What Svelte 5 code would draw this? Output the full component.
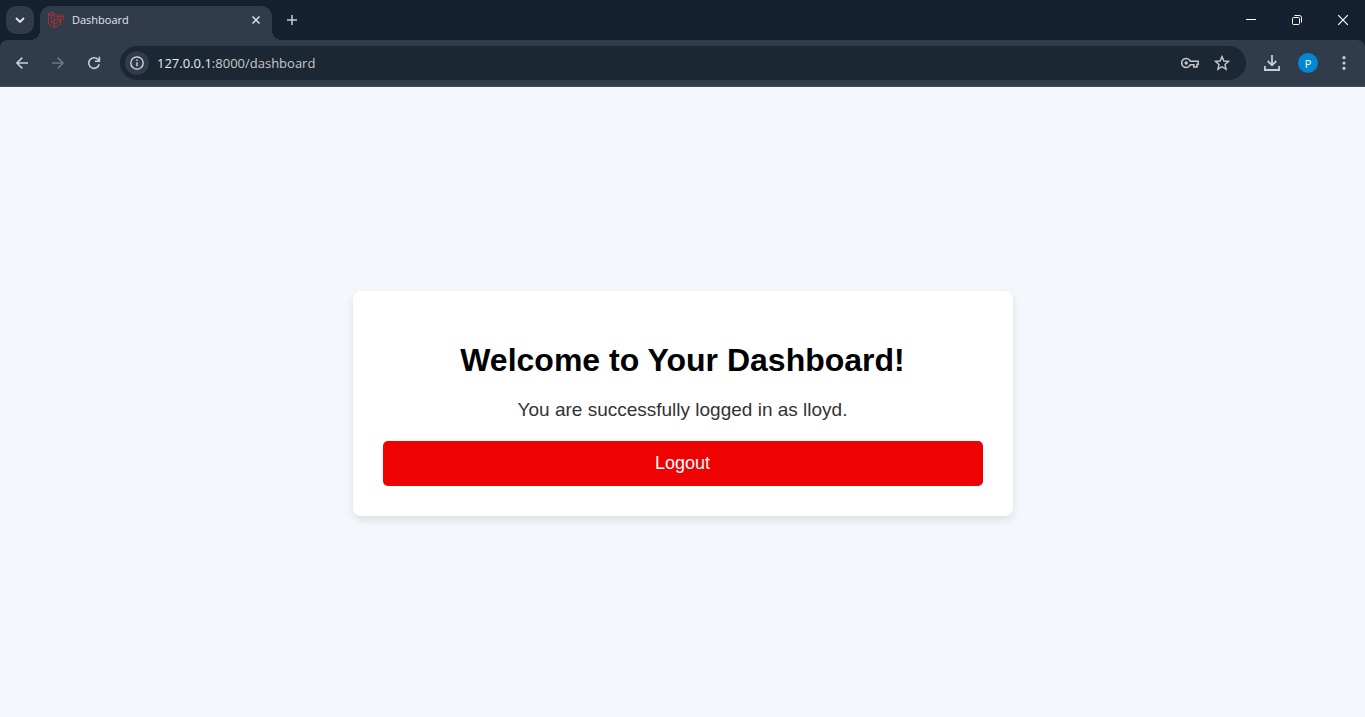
<script>
  const user = 'lloyd';
  const host = '127.0.0.1';
  const path = ':8000/dashboard';
</script>

<div class="window">
  <header>
    <div class="tabstrip">
      <button class="tabsearch" aria-label="Search tabs">
        <svg width="10" height="6" viewBox="0 0 10 6"><path d="M1 1l4 4 4-4" fill="none" stroke="#e3e6ea" stroke-width="1.8" /></svg>
      </button>
      <div class="tab">
        <svg width="16" height="16" viewBox="0 0 50 52" fill="#ff2d20" aria-hidden="true"><path d="M49.626 11.564a.809.809 0 0 1 .028.209v10.972a.8.8 0 0 1-.402.694l-9.209 5.302V39.25c0 .286-.152.55-.4.694L20.42 51.01c-.044.025-.092.041-.14.058-.018.006-.035.017-.054.022a.805.805 0 0 1-.41 0c-.022-.006-.042-.018-.063-.026-.044-.016-.09-.03-.132-.054L.402 39.944A.801.801 0 0 1 0 39.25V6.334c0-.072.01-.142.028-.21.006-.023.02-.044.028-.067.015-.042.029-.085.051-.124.015-.026.037-.047.055-.071.023-.032.044-.065.071-.093.023-.023.053-.04.079-.06.029-.024.055-.05.088-.069h.001l9.61-5.533a.802.802 0 0 1 .8 0l9.61 5.533h.002c.032.02.059.045.088.068.026.02.055.038.078.06.028.029.048.062.072.094.017.024.04.045.054.071.023.04.036.082.052.124.008.023.022.044.028.068a.809.809 0 0 1 .028.209v20.559l8.008-4.611v-10.51c0-.07.01-.141.028-.208.007-.024.02-.045.028-.068.016-.042.03-.085.052-.124.015-.026.037-.047.054-.071.024-.032.044-.065.072-.093.023-.023.052-.04.078-.06.03-.024.056-.05.088-.069h.001l9.611-5.533a.801.801 0 0 1 .8 0l9.61 5.533c.034.02.06.045.09.068.025.02.054.038.077.06.028.029.048.062.072.094.018.024.04.045.054.071.023.039.036.082.052.124.009.023.022.044.028.068zm-1.574 10.718v-9.124l-3.363 1.936-4.646 2.675v9.124l8.01-4.611zm-9.61 16.505v-9.13l-4.57 2.61-13.05 7.448v9.216l17.62-10.144zM1.602 7.719v31.068L19.22 48.93v-9.214l-9.204-5.209-.003-.002-.004-.002c-.031-.018-.057-.044-.086-.066-.025-.02-.054-.036-.076-.058l-.002-.003c-.026-.025-.044-.056-.066-.084-.02-.027-.044-.05-.06-.078l-.001-.003c-.018-.03-.029-.066-.042-.1-.013-.03-.03-.058-.038-.09v-.001c-.01-.038-.012-.078-.016-.117-.004-.03-.012-.06-.012-.09v-.002-21.481L4.965 9.654 1.602 7.72zm8.81-5.994L2.405 6.334l8.005 4.609 8.006-4.61-8.006-4.608zm4.164 28.764l4.645-2.674V7.719l-3.363 1.936-4.646 2.675v20.096l3.364-1.937zM39.243 7.164l-8.006 4.609 8.006 4.609 8.005-4.61-8.005-4.608zm-.801 10.605l-4.646-2.675-3.363-1.936v9.124l4.645 2.674 3.364 1.937v-9.124zM20.02 38.33l11.743-6.704 5.87-3.35-8-4.606-9.211 5.303-8.395 4.833 7.993 4.524z" /></svg>
        <span class="title">Dashboard</span>
        <button class="icon small" aria-label="Close tab">
          <svg width="8" height="8" viewBox="0 0 8 8"><path d="M.5.5l7 7M7.5.5l-7 7" stroke="#dfe3e8" stroke-width="1.5" /></svg>
        </button>
      </div>
      <button class="icon newtab" aria-label="New tab">
        <svg width="10" height="10" viewBox="0 0 10 10"><path d="M5 0v10M0 5h10" stroke="#c3cfdd" stroke-width="1.5" /></svg>
      </button>
      <div class="controls">
        <button aria-label="Minimize"><svg width="10" height="10" viewBox="0 0 10 10"><path d="M0 4.5h10" stroke="#fff" /></svg></button>
        <button aria-label="Restore"><svg width="10" height="10" viewBox="0 0 10 10" fill="none" stroke="#fff"><rect x=".5" y="2.5" width="7" height="7" rx="1" /><path d="M2.5.5h5a2 2 0 0 1 2 2v5" /></svg></button>
        <button aria-label="Close"><svg width="10" height="10" viewBox="0 0 10 10"><path d="M0 0l10 10M10 0L0 10" stroke="#fff" stroke-width="1.2" /></svg></button>
      </div>
    </div>

    <div class="toolbar">
      <div class="nav">
        <button class="icon" aria-label="Back"><svg width="12" height="12" viewBox="0 0 12 12"><path d="M12 6H1.2M6.3.6L.9 6l5.4 5.4" fill="none" stroke="#c3cfdd" stroke-width="1.5" /></svg></button>
        <button class="icon" aria-label="Forward"><svg width="12" height="12" viewBox="0 0 12 12"><path d="M0 6h10.8M5.7.6L11.1 6l-5.4 5.4" fill="none" stroke="#6e7784" stroke-width="1.5" /></svg></button>
        <button class="icon" aria-label="Reload"><svg width="14" height="14" viewBox="0 0 14 14" fill="none" stroke="#c3cfdd" stroke-width="1.6"><path d="M12.2 8.2A5.3 5.3 0 1 1 10.9 3.4l1.3 1.3" /><path d="M12.4.8v4.5H7.9" /></svg></button>
      </div>
      <div class="address">
        <button class="icon info" aria-label="Site information"><svg width="14" height="14" viewBox="0 0 14 14" fill="none" stroke="#dfe3e8" stroke-width="1.3"><circle cx="7" cy="7" r="6.2" /><path d="M7 6.2v4M7 3.6v1.4" /></svg></button>
        <span class="url"><b>{host}</b>{path}</span>
        <button class="icon" aria-label="Passwords"><svg width="18" height="12" viewBox="0 0 18 12" fill="none" stroke="#c7c9cc" stroke-width="1.5"><path d="M9.3 4.2H17.2V7.6H16V10H12.8V7.8H9.3A4.5 4.5 0 1 1 9.3 4.2Z" /><circle cx="5.2" cy="6" r="1.7" fill="#c7c9cc" stroke="none" /></svg></button>
        <button class="icon" aria-label="Bookmark this tab"><svg width="16" height="16" viewBox="0 0 16 16"><path d="M8 1.6L9.9 6l4.7.4-3.6 3.1 1.1 4.7L8 11.7l-4.1 2.5L5 9.5 1.4 6.4 6.1 6Z" fill="none" stroke="#c7c9cc" stroke-width="1.4" /></svg></button>
      </div>
      <div class="actions">
        <button class="icon" aria-label="Downloads"><svg width="16" height="16" viewBox="0 0 16 16" fill="none" stroke="#c3cfdd" stroke-width="1.8"><path d="M8 0v10M3.7 6L8 10.3 12.3 6M.9 11v4H15.1v-4" /></svg></button>
        <button class="avatar" aria-label="Profile">P</button>
        <button class="icon" aria-label="Menu"><svg width="4" height="14" viewBox="0 0 4 14" fill="#c3cfdd"><circle cx="2" cy="1.7" r="1.6" /><circle cx="2" cy="7" r="1.6" /><circle cx="2" cy="12.3" r="1.6" /></svg></button>
      </div>
    </div>
  </header>

  <main>
    <section class="card">
      <h1>Welcome to Your Dashboard!</h1>
      <p>You are successfully logged in as {user}.</p>
      <button class="logout">Logout</button>
    </section>
  </main>
</div>

<style>
  :global(body) {
    margin: 0;
  }
  .window {
    display: flex;
    flex-direction: column;
    min-height: 100vh;
    background: #f4f7fc;
    font-family: "Liberation Sans", Arial, sans-serif;
  }
  button {
    display: flex;
    align-items: center;
    justify-content: center;
    padding: 0;
    border: 0;
    background: none;
    font-family: inherit;
  }
  header {
    background: #152130;
    font-family: "Segoe UI", "Open Sans", "Noto Sans", sans-serif;
  }
  .tabstrip {
    display: flex;
    height: 40px;
  }
  .tabsearch {
    width: 28px;
    height: 28px;
    margin: 6px;
    border-radius: 10px;
    background: #303b4b;
  }
  .tab {
    position: relative;
    display: flex;
    align-items: center;
    gap: 8px;
    box-sizing: border-box;
    width: 232px;
    margin-top: 6px;
    padding: 0 6px 6px 8px;
    border-radius: 10px 10px 0 0;
    background: #303b4b;
  }
  .tab::before,
  .tab::after {
    content: "";
    position: absolute;
    bottom: 0;
    width: 10px;
    height: 10px;
  }
  .tab::before {
    right: 100%;
    background: radial-gradient(circle at 0 0, transparent 10px, #303b4b 10px);
  }
  .tab::after {
    left: 100%;
    background: radial-gradient(circle at 100% 0, transparent 10px, #303b4b 10px);
  }
  .title {
    flex: 1;
    color: #e3e6ea;
    font-size: 11px;
    line-height: 16px;
  }
  .icon {
    width: 28px;
    height: 28px;
    border-radius: 50%;
  }
  .icon.small {
    width: 20px;
    height: 20px;
  }
  .newtab {
    margin: 6px;
  }
  .controls {
    display: flex;
    margin-left: auto;
  }
  .controls button {
    width: 46px;
    height: 40px;
    padding-left: 2px;
  }
  .toolbar {
    display: flex;
    align-items: center;
    gap: 12px;
    padding: 6px 7px 6px 8px;
    border-bottom: 1px solid #48505c;
    border-radius: 8px 8px 0 0;
    background: #303b4b;
  }
  .nav,
  .actions {
    display: flex;
    align-items: center;
    gap: 8px;
  }
  .address {
    display: flex;
    flex: 1;
    align-items: center;
    gap: 4px;
    height: 34px;
    padding: 0 10px 0 5px;
    border-radius: 17px;
    background: #1b2733;
  }
  .info {
    width: 24px;
    height: 24px;
    background: #303b4b;
  }
  .url {
    flex: 1;
    padding-left: 4px;
    color: #c7c9cc;
    font-size: 13px;
    line-height: 20px;
  }
  .url b {
    color: #e9ebee;
    font-weight: 400;
  }
  .avatar {
    width: 20px;
    height: 20px;
    margin: 0 4px;
    border-radius: 50%;
    background: #0288d1;
    color: #fff;
    font-size: 11px;
  }
  main {
    display: flex;
    flex: 1;
    align-items: center;
    justify-content: center;
    padding-top: 2px;
  }
  .card {
    box-sizing: border-box;
    width: 100%;
    max-width: 660px;
    padding: 30px;
    border-radius: 8px;
    background: #fff;
    box-shadow: 0 4px 8px rgba(0, 0, 0, 0.1);
    text-align: center;
  }
  h1 {
    margin: 20px 0;
    color: #000;
    font-size: 32px;
    line-height: 38px;
  }
  p {
    margin: 0 0 20px;
    color: #333;
    font-size: 19px;
    line-height: 22px;
  }
  .logout {
    width: 100%;
    padding: 12px;
    border-radius: 5px;
    background: #ee0202;
    color: #fff;
    font-size: 18px;
    line-height: 21px;
  }
</style>
